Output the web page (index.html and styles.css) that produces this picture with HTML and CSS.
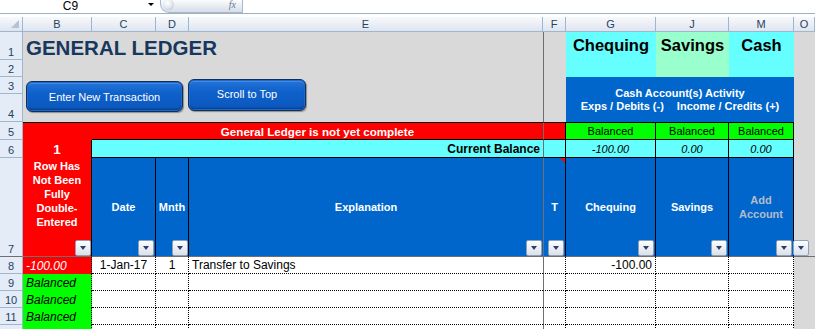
FILE: index.html
```html
<!DOCTYPE html>
<html>
<head>
<meta charset="utf-8">
<title>General Ledger</title>
<link rel="stylesheet" href="styles.css">
</head>
<body>
<div class="formula-bar">
  <div class="namebox"><span class="namebox-text">C9</span></div>
  <div class="namebox-drop"><span class="drop-tri"></span></div>
  <div class="fx-pill"><span class="fx-knob"></span><span class="fx">fx</span></div>
  <div class="formula-input"></div>
</div>
<div class="sheet">
  <div class="ch corner"><span class="corner-tri"></span></div>
  <div class="ch">B</div>
  <div class="ch">C</div>
  <div class="ch">D</div>
  <div class="ch">E</div>
  <div class="ch">F</div>
  <div class="ch">G</div>
  <div class="ch">J</div>
  <div class="ch">M</div>
  <div class="ch">O</div>

  <div class="rh">1</div>
  <div class="title-cell"><h1 class="title">GENERAL LEDGER</h1></div>
  <div class="f-top"></div>
  <div class="acct cyan">Chequing</div>
  <div class="acct mint">Savings</div>
  <div class="acct cyan">Cash</div>
  <div class="o-top"></div>

  <div class="rh">2</div>

  <div class="rh">3</div>
  <div class="btn-cell">
    <button class="btn btn-enter">Enter New Transaction</button>
    <button class="btn btn-scroll">Scroll to Top</button>
  </div>
  <div class="activity">
    <span>Cash Account(s) Activity</span>
    <span>Exps / Debits (-)<span class="gap"></span>Income / Credits (+)</span>
  </div>

  <div class="rh">4</div>

  <div class="rh">5</div>
  <div class="b5"></div>
  <div class="msg">General Ledger is not yet complete</div>
  <div class="f5"></div>
  <div class="bal">Balanced</div>
  <div class="bal">Balanced</div>
  <div class="bal">Balanced</div>
  <div class="o-mid"></div>

  <div class="rh">6</div>
  <div class="b6">1</div>
  <div class="cur">Current Balance</div>
  <div class="f6"></div>
  <div class="val">-100.00</div>
  <div class="val">0.00</div>
  <div class="val">0.00</div>

  <div class="rh rh7">7</div>
  <div class="hd b7"><span class="b7-text">Row Has<br>Not Been<br>Fully<br>Double-<br>Entered</span><span class="filter flush"></span></div>
  <div class="hd"><span class="lbl">Date</span><span class="filter"></span></div>
  <div class="hd"><span class="lbl">Mnth</span><span class="filter flush"></span></div>
  <div class="hd hd-e"><span class="lbl">Explanation</span><span class="filter"></span></div>
  <div class="hd hd-f"><span class="lbl">T</span><span class="cmt"></span><span class="filter"></span></div>
  <div class="hd"><span class="lbl">Chequing</span><span class="filter"></span></div>
  <div class="hd"><span class="lbl">Savings</span><span class="filter"></span></div>
  <div class="hd"><span class="lbl lbl-muted">Add<br>Account</span><span class="filter"></span></div>
  <div class="o7"><span class="filter filter-o"></span></div>

  <div class="rh">8</div>
  <div class="bstat red-stat">-100.00</div>
  <div class="d center">1-Jan-17</div>
  <div class="d center">1</div>
  <div class="d d-e">Transfer to Savings</div>
  <div class="d d-f"></div>
  <div class="d right">-100.00</div>
  <div class="d"></div>
  <div class="d"></div>
  <div class="o-bottom"></div>

  <div class="rh">9</div>
  <div class="bstat green-stat">Balanced</div>
  <div class="d"></div><div class="d"></div><div class="d d-e"></div><div class="d d-f"></div><div class="d"></div><div class="d"></div><div class="d"></div>

  <div class="rh">10</div>
  <div class="bstat green-stat">Balanced</div>
  <div class="d"></div><div class="d"></div><div class="d d-e"></div><div class="d d-f"></div><div class="d"></div><div class="d"></div><div class="d"></div>

  <div class="rh">11</div>
  <div class="bstat green-stat">Balanced</div>
  <div class="d"></div><div class="d"></div><div class="d d-e"></div><div class="d d-f"></div><div class="d"></div><div class="d"></div><div class="d"></div>

  <div class="rh"></div>
  <div class="bstat green-stat"></div>
  <div class="d"></div><div class="d"></div><div class="d d-e"></div><div class="d d-f"></div><div class="d"></div><div class="d"></div><div class="d"></div>
</div>
</body>
</html>
```

FILE: styles.css
```css
html, body {
  margin: 0;
  padding: 0;
}
body {
  width: 815px;
  height: 329px;
  overflow: hidden;
  background: #fff;
  font-family: "Liberation Sans", Arial, sans-serif;
  color: #000;
}

/* ---------- formula bar ---------- */
.formula-bar {
  display: flex;
  height: 14px;
  box-sizing: border-box;
  border-bottom: 1px solid #9db0c8;
  margin-bottom: 3px;
  overflow: hidden;
}
.namebox {
  width: 141px;
  text-align: center;
  overflow: hidden;
}
.namebox-text {
  display: block;
  font-size: 12px;
  line-height: 12px;
  margin-top: 0;
}
.namebox-drop {
  width: 19px;
  display: flex;
  justify-content: center;
  padding-top: 3px;
  box-sizing: border-box;
}
.drop-tri {
  width: 0;
  height: 0;
  border-left: 3px solid transparent;
  border-right: 3px solid transparent;
  border-top: 3px solid #000;
}
.fx-pill {
  width: 83px;
  height: 13px;
  box-sizing: border-box;
  border: 1px solid #a9b8cc;
  border-top: none;
  border-radius: 0 0 0 9px;
  background: linear-gradient(#fbfcfd, #d6dde8);
  display: flex;
  align-items: center;
  justify-content: space-between;
  padding: 0 6px 0 2px;
}
.fx-knob {
  width: 11px;
  height: 11px;
  border-radius: 50%;
  margin-top: -3px;
  background: radial-gradient(circle at 40% 35%, #ffffff 0%, #e3e8ef 50%, #aab6c6 100%);
}
.fx {
  font-family: "Liberation Serif", serif;
  font-style: italic;
  font-size: 10px;
  line-height: 10px;
  color: #6b7a90;
  margin-top: -2px;
}
.formula-input {
  flex: 1;
}

/* ---------- sheet grid ---------- */
.sheet {
  display: grid;
  grid-template-columns: 23px 69px 64px 33px 354px 23px 90px 73px 65px 21px;
  grid-template-rows: 15px 28px 17px 17px 28px 18px 18px 99px repeat(5, 17px);
}
.sheet > * {
  box-sizing: border-box;
  min-width: 0;
  min-height: 0;
}

.ch {
  background: linear-gradient(#f7f9fc, #dee5ef);
  border-right: 1px solid #9eb6ce;
  border-bottom: 1px solid #9eb6ce;
  font-size: 11px;
  color: #27415f;
  display: flex;
  align-items: center;
  justify-content: center;
}
.corner {
  justify-content: flex-end;
  align-items: flex-end;
  padding: 0 3px 3px 0;
}
.corner-tri {
  width: 0;
  height: 0;
  border-left: 8px solid transparent;
  border-bottom: 8px solid #b4c2d4;
}

.rh {
  background: #e4ecf7;
  border-right: 1px solid #9eb6ce;
  border-bottom: 1px solid #9eb6ce;
  font-size: 11px;
  line-height: 12px;
  color: #27415f;
  display: flex;
  align-items: flex-end;
  justify-content: center;
  padding-bottom: 1px;
}
.rh7 {
  border-bottom-color: #6f6f6f;
}

/* ---------- top area ---------- */
.title-cell {
  grid-column: span 4;
  grid-row: span 2;
  background: #d9d9d9;
  padding: 5px 0 0 3px;
}
.title {
  margin: 0;
  font-size: 20.5px;
  line-height: 21px;
  font-weight: bold;
  color: #17375e;
  white-space: nowrap;
}
.f-top {
  grid-row: span 4;
  background: #d9d9d9;
  border-left: 1px solid #6f6f6f;
}
.o-top {
  grid-row: span 4;
  background: #d9d9d9;
}
.acct {
  grid-row: span 2;
  font-size: 16.5px;
  line-height: 19px;
  font-weight: bold;
  text-align: center;
  padding-top: 4px;
  white-space: nowrap;
}
.cyan { background: #66ffff; }
.mint { background: #99ffcc; }

.btn-cell {
  grid-column: span 4;
  grid-row: span 2;
  background: #d9d9d9;
  display: flex;
  align-items: flex-start;
  gap: 5px;
  padding-left: 3px;
}
.btn {
  font-family: "Liberation Sans", Arial, sans-serif;
  font-size: 11px;
  color: #fff;
  padding: 0;
  border: 1px solid #0f2f5c;
  border-radius: 6px;
  background: linear-gradient(#2474d8 0%, #0e60cb 40%, #0b58bd 100%);
  box-shadow: inset 0 0 0 1px #1d6ad0, inset 0 -2px 2px rgba(0, 0, 0, 0.35), inset 0 2px 1px rgba(255, 255, 255, 0.18), 1px 1px 1px rgba(0, 0, 0, 0.35);
}
.btn-enter {
  width: 157px;
  height: 31px;
  margin-top: 4px;
}
.btn-scroll {
  width: 118px;
  height: 32px;
  margin-top: 2px;
  padding-bottom: 2px;
}

.activity {
  grid-column: span 3;
  grid-row: span 2;
  background: #0066cc;
  color: #fff;
  font-size: 11px;
  line-height: 13px;
  font-weight: bold;
  display: flex;
  flex-direction: column;
  align-items: center;
  justify-content: center;
  white-space: nowrap;
}
.gap {
  display: inline-block;
  width: 13px;
}

/* ---------- row 5 ---------- */
.b5 {
  background: #ff0000;
  border-top: 1px solid #000;
}
.msg {
  grid-column: span 3;
  background: #ff0000;
  border-top: 1px solid #000;
  border-bottom: 1px solid #000;
  color: #fff;
  font-weight: bold;
  font-size: 11.6px;
  display: flex;
  align-items: center;
  justify-content: center;
  white-space: nowrap;
}
.f5 {
  background: #ff0000;
  border-top: 1px solid #000;
  border-bottom: 1px solid #000;
  border-left: 1px solid #6f6f6f;
  border-right: 1px solid #000;
}
.bal {
  background: #00ff00;
  border-top: 1px solid #000;
  border-bottom: 1px solid #000;
  border-right: 1px solid #000;
  font-size: 11px;
  display: flex;
  align-items: center;
  justify-content: center;
}
.o-mid {
  grid-row: span 2;
  background: #d9d9d9;
}

/* ---------- row 6 ---------- */
.b6 {
  background: #ff0000;
  border-right: 1px solid #000;
  color: #fff;
  font-weight: bold;
  font-size: 13.5px;
  display: flex;
  align-items: center;
  justify-content: center;
}
.cur {
  grid-column: span 3;
  background: #66ffff;
  border-bottom: 1px solid #000;
  font-weight: bold;
  font-size: 12px;
  display: flex;
  align-items: center;
  justify-content: flex-end;
  padding-right: 3px;
  white-space: nowrap;
}
.f6 {
  background: #66ffff;
  border-left: 1px solid #6f6f6f;
  border-right: 1px solid #000;
  border-bottom: 1px solid #000;
}
.val {
  background: #66ffff;
  border-right: 1px solid #000;
  border-bottom: 1px solid #000;
  font-size: 11px;
  font-style: italic;
  display: flex;
  align-items: center;
  justify-content: center;
}

/* ---------- row 7 headers ---------- */
.hd {
  background: #0066cc;
  border-right: 1px solid #000;
  border-bottom: 1px solid #6f6f6f;
  display: grid;
  color: #fff;
  font-weight: bold;
  font-size: 11px;
  line-height: 14px;
}
.hd > * {
  grid-area: 1 / 1;
}
.lbl {
  place-self: center;
  text-align: center;
  white-space: nowrap;
}
.lbl-muted {
  color: #b3bccb;
}
.hd-e {
  border-right: none;
}
.hd-f {
  border-left: 1px solid #6f6f6f;
}
.b7 {
  background: #ff0000;
}
.b7-text {
  place-self: start center;
  text-align: center;
  margin-top: 1px;
  white-space: nowrap;
}
.filter {
  place-self: end end;
  margin-right: 1px;
  width: 16px;
  height: 16px;
  box-sizing: border-box;
  border: 1px solid #8ea1bb;
  border-radius: 2px;
  background: linear-gradient(#fcfdfe, #dce1e8);
  display: flex;
  align-items: center;
  justify-content: center;
}
.filter::after {
  content: "";
  width: 0;
  height: 0;
  margin-top: -1px;
  border-left: 3.5px solid transparent;
  border-right: 3.5px solid transparent;
  border-top: 4px solid #2c3d72;
}
.flush {
  margin-right: 0;
}
.cmt {
  place-self: start end;
  width: 0;
  height: 0;
  border-top: 5px solid #ff0000;
  border-left: 5px solid transparent;
}
.o7 {
  background: #d9d9d9;
  border-bottom: 1px solid #6f6f6f;
  display: grid;
}
.filter-o {
  place-self: end start;
  margin: 0 0 0 -1px;
}

/* ---------- data rows ---------- */
.bstat {
  border-right: 1px dotted #000;
  font-size: 12px;
  font-style: italic;
  display: flex;
  align-items: center;
  padding-left: 3px;
  white-space: nowrap;
}
.red-stat {
  background: #ff0000;
  color: #fff;
}
.green-stat {
  background: #00ff00;
}
.d {
  background: #fff;
  border-right: 1px dotted #000;
  border-bottom: 1px dotted #000;
  font-size: 12px;
  display: flex;
  align-items: center;
  padding: 0 3px;
  white-space: nowrap;
}
.center {
  justify-content: center;
}
.right {
  justify-content: flex-end;
}
.d-e {
  border-right: none;
}
.d-f {
  border-left: 1px solid #6f6f6f;
}
.o-bottom {
  grid-row: span 5;
  background: #d9d9d9;
}
```
